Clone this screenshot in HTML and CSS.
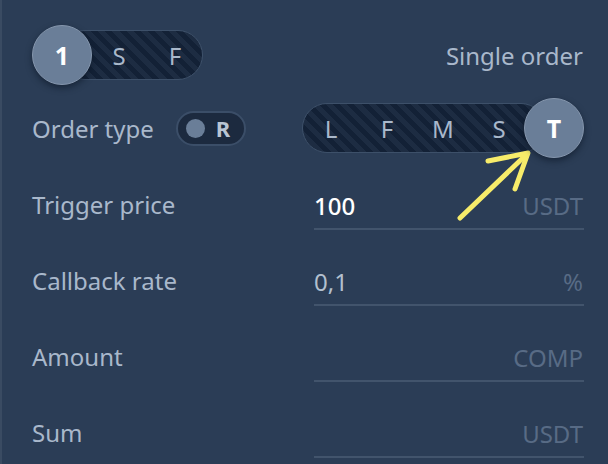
FILE: index.html
```html
<!DOCTYPE html>
<html>
<head>
<meta charset="utf-8">
<link rel="stylesheet" href="styles.css">
</head>
<body>
<div class="panel">
  <div class="head">
    <div class="tog tog-left">
      <div class="knob">1</div>
      <div class="pill pill-left">
        <span class="opt">S</span>
        <span class="opt">F</span>
      </div>
    </div>
    <div class="title">Single order</div>
  </div>
  <div class="otype">
    <span class="lbl">Order type</span>
    <div class="rtog"><span class="dot"></span><span class="r">R</span></div>
    <div class="tog tog-right">
      <div class="pill pill-right">
        <span class="opt">L</span>
        <span class="opt">F</span>
        <span class="opt">M</span>
        <span class="opt">S</span>
      </div>
      <div class="knob knob-right">T</div>
    </div>
  </div>
  <div class="fields">
    <div class="field"><span class="lbl">Trigger price</span><div class="inp"><span class="val val-strong">100</span><span class="unit">USDT</span></div></div>
    <div class="field"><span class="lbl">Callback rate</span><div class="inp"><span class="val">0,1</span><span class="unit">%</span></div></div>
    <div class="field"><span class="lbl">Amount</span><div class="inp"><span class="val"></span><span class="unit">COMP</span></div></div>
    <div class="field"><span class="lbl">Sum</span><div class="inp"><span class="val"></span><span class="unit">USDT</span></div></div>
  </div>
  <svg class="arrow" width="100" height="90" viewBox="0 0 100 90">
    <g fill="none" stroke="#f7ec6a" stroke-width="5" stroke-linecap="round" stroke-linejoin="round">
      <path d="M8 82 L75 18"/>
      <path d="M36 25 L76 17 L63 53"/>
    </g>
  </svg>
</div>
</body>
</html>
```
FILE: styles.css
```css
html, body {
  margin: 0;
  padding: 0;
  background: #2b3d56;
}
body {
  width: 608px;
  height: 464px;
  overflow: hidden;
  font-family: "Noto Sans", sans-serif;
}
.panel {
  position: relative;
  height: 464px;
  box-sizing: border-box;
  border-left: 2px solid #3a4b62;
  padding: 25px 24px 0 30px;
}
.head {
  height: 60px;
  display: flex;
  align-items: center;
  justify-content: space-between;
}
.tog {
  display: flex;
  align-items: center;
}
.knob {
  position: relative;
  z-index: 2;
  width: 60px;
  height: 60px;
  box-sizing: border-box;
  border-radius: 50%;
  background: #6a7e98;
  border: 1px solid #8596ad;
  box-shadow: 0 3px 6px rgba(10, 20, 35, 0.55);
  color: #ffffff;
  font-weight: 700;
  font-size: 25px;
  display: flex;
  align-items: center;
  justify-content: center;
}
.pill {
  height: 50px;
  box-sizing: border-box;
  border-radius: 25px;
  border: 1px solid #3d5069;
  background: repeating-linear-gradient(45deg, #1d2c42 0 5px, #132136 5px 10px);
  display: flex;
  align-items: center;
  color: #a9b8cb;
  font-size: 24px;
}
.pill-left {
  margin-left: -32px;
  padding-left: 30px;
  width: 143px;
}
.pill-right {
  width: 244px;
  padding-right: 20px;
}
.knob-right {
  margin-left: -22px;
}
.opt {
  width: 56px;
  text-align: center;
  flex: none;
}
.title {
  color: #a9b8cb;
  font-size: 24px;
  padding-right: 1px;
}
.otype {
  margin-top: 13px;
  height: 60px;
  display: flex;
  align-items: center;
}
.lbl {
  color: #a9b8cb;
  font-size: 24px;
}
.rtog {
  margin-left: 22px;
  width: 70px;
  height: 35px;
  box-sizing: border-box;
  border-radius: 18px;
  border: 2px solid #3b4e68;
  background: #1c2a3f;
  display: flex;
  align-items: center;
  padding-left: 8px;
}
.dot {
  width: 19px;
  height: 19px;
  border-radius: 50%;
  background: #6a7e98;
}
.r {
  margin-left: 11px;
  color: #b9c5d4;
  font-weight: 700;
  font-size: 22px;
}
.tog-right {
  margin-left: auto;
}
.fields {
  padding-top: 12px;
}
.field {
  height: 76px;
  display: flex;
  align-items: flex-start;
}
.field .lbl {
  flex: 0 0 282px;
  margin-top: 12px;
  line-height: 46px;
}
.inp {
  flex: 1;
  margin-top: 12px;
  height: 46px;
  border-bottom: 2px solid #42546c;
  display: flex;
  align-items: center;
  justify-content: space-between;
  padding-right: 1px;
}
.val {
  color: #b3c0cf;
  font-size: 24px;
}
.val-strong {
  color: #ffffff;
  font-weight: 500;
}
.unit {
  color: #586b85;
  font-size: 24px;
}
.arrow {
  position: absolute;
  left: 450px;
  top: 136px;
}
```
